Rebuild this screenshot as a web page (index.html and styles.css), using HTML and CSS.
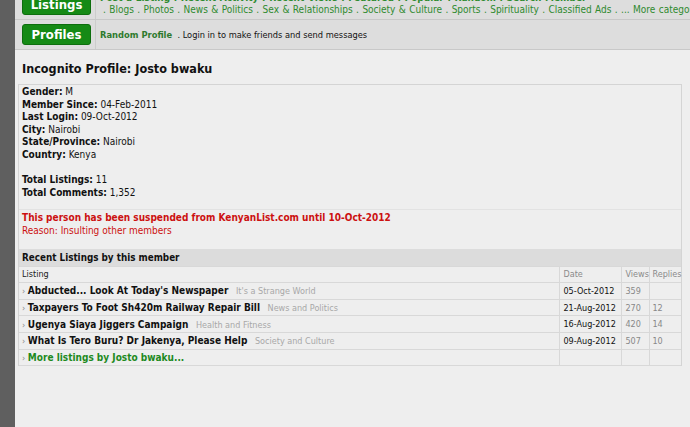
FILE: index.html
```html
<!DOCTYPE html>
<html lang="en">
<head>
    <meta charset="UTF-8">
    <title>Incognito Profile: Josto bwaku</title>
    <link rel="stylesheet" href="styles.css">
</head>
<body>
    <div class="sidebar"></div>
    <div class="main">
        <div class="nav">
            <div class="nav-row">
                <div class="nav-btn-cell"><a href="#" class="nav-btn">Listings</a></div>
                <div class="nav-links">
                    <div class="nav-main">
                        <a href="#">Post a Listing</a> . <a href="#">Recent Activity</a> . <a href="#">Recent Views</a> . <a href="#">Featured</a> . <a href="#">Popular</a> . <a href="#">Random</a> . <a href="#">Search Member</a>
                    </div>
                    <div class="nav-sub">
                        . <a href="#">Blogs</a> . <a href="#">Photos</a> . <a href="#">News &amp; Politics</a> . <a href="#">Sex &amp; Relationships</a> . <a href="#">Society &amp; Culture</a> . <a href="#">Sports</a> . <a href="#">Spirituality</a> . <a href="#">Classified Ads</a> . <a href="#">... More categories</a>
                    </div>
                </div>
            </div>
            <div class="nav-row">
                <div class="nav-btn-cell"><a href="#" class="nav-btn">Profiles</a></div>
                <div class="nav-links nav-single">
                    <a href="#" class="strong-link">Random Profile</a> &nbsp;. Login in to make friends and send messages
                </div>
            </div>
        </div>

        <div class="content">
            <h2 class="page-title">Incognito Profile: Josto bwaku</h2>
            <div class="profile-box">
                <div class="info">
                    <b>Gender:</b> M<br>
                    <b>Member Since:</b> 04-Feb-2011<br>
                    <b>Last Login:</b> 09-Oct-2012<br>
                    <b>City:</b> Nairobi<br>
                    <b>State/Province:</b> Nairobi<br>
                    <b>Country:</b> Kenya<br>
                    <br>
                    <b>Total Listings:</b> 11<br>
                    <b>Total Comments:</b> 1,352
                </div>
                <div class="notice">
                    <b>This person has been suspended from KenyanList.com until 10-Oct-2012</b><br>
                    Reason: Insulting other members
                </div>

                <table class="listings">
                    <colgroup>
                        <col>
                        <col class="w-date">
                        <col class="w-views">
                        <col class="w-replies">
                    </colgroup>
                    <tr>
                        <th colspan="4" class="section-head">Recent Listings by this member</th>
                    </tr>
                    <tr class="col-head">
                        <td class="c-title">Listing</td>
                        <td class="c-date">Date</td>
                        <td class="c-views">Views</td>
                        <td class="c-replies">Replies</td>
                    </tr>
                    <tr>
                        <td class="c-title"><span class="arrow">›</span> <a href="#">Abducted... Look At Today's Newspaper</a> <span class="cat">It's a Strange World</span></td>
                        <td class="c-date">05-Oct-2012</td>
                        <td class="c-views">359</td>
                        <td class="c-replies"></td>
                    </tr>
                    <tr>
                        <td class="c-title"><span class="arrow">›</span> <a href="#">Taxpayers To Foot Sh420m Railway Repair Bill</a> <span class="cat">News and Politics</span></td>
                        <td class="c-date">21-Aug-2012</td>
                        <td class="c-views">270</td>
                        <td class="c-replies">12</td>
                    </tr>
                    <tr>
                        <td class="c-title"><span class="arrow">›</span> <a href="#">Ugenya Siaya Jiggers Campaign</a> <span class="cat">Health and Fitness</span></td>
                        <td class="c-date">16-Aug-2012</td>
                        <td class="c-views">420</td>
                        <td class="c-replies">14</td>
                    </tr>
                    <tr>
                        <td class="c-title"><span class="arrow">›</span> <a href="#">What Is Tero Buru? Dr Jakenya, Please Help</a> <span class="cat">Society and Culture</span></td>
                        <td class="c-date">09-Aug-2012</td>
                        <td class="c-views">507</td>
                        <td class="c-replies">10</td>
                    </tr>
                    <tr>
                        <td class="c-title"><span class="arrow">›</span> <a href="#" class="more">More listings by Josto bwaku...</a></td>
                        <td class="c-date"></td>
                        <td class="c-views"></td>
                        <td class="c-replies"></td>
                    </tr>
                </table>
            </div>
        </div>
    </div>
</body>
</html>
```

FILE: styles.css
```css
body {
    margin: 0;
    display: flex;
    min-height: 100vh;
    background-color: #eeeeee;
    font-family: "DejaVu Sans Condensed", "DejaVu Sans", sans-serif;
    font-size: 10px;
    color: #111;
    overflow: hidden;
}
a {
    text-decoration: none;
}
.sidebar {
    width: 15px;
    flex-shrink: 0;
    background-color: #5f5f5f;
}
.main {
    flex: 1;
    min-width: 0;
}
.nav {
    margin-top: -10px;
    background-color: #dddddd;
}
.nav-row {
    display: flex;
    border-bottom: 1px solid #c8c8c8;
    height: 29px;
}
.nav-btn-cell {
    width: 81px;
    flex-shrink: 0;
    padding: 4px 0 0 7px;
    box-sizing: border-box;
    border-right: 1px solid #cccccc;
}
.nav-btn {
    display: block;
    width: 69px;
    height: 21px;
    box-sizing: border-box;
    background-color: #158a15;
    border: 1px solid #0d6e0d;
    border-radius: 3px;
    color: #fff;
    font-weight: bold;
    font-size: 13px;
    line-height: 19px;
    text-align: center;
}
.nav-links {
    padding: 2px 0 0 4px;
    white-space: nowrap;
    overflow: hidden;
    color: #2f8a2f;
    font-size: 10px;
    line-height: 12px;
}
.nav-links a {
    color: #2f8a2f;
}
.nav-main {
    font-weight: bold;
    word-spacing: 0.5px;
}
.nav-sub {
    padding-left: 3px;
    word-spacing: 0.55px;
}
.nav-single {
    color: #111;
    padding-top: 9px;
    font-size: 9.2px;
}
.nav-single .strong-link {
    color: #2e7a2e;
    font-weight: bold;
    font-size: 9.3px;
}
.content {
    padding: 0 8px 0 3px;
}
.page-title {
    margin: 0;
    padding: 10px 4px 6px;
    font-size: 12.5px;
    line-height: 18px;
}
.profile-box {
    border: 1px solid #d4d4d4;
    border-bottom: none;
}
.info {
    padding: 1px 3px 10px;
    line-height: 12.6px;
    border-bottom: 1px solid #e2e2e2;
}
.notice {
    padding: 2px 3px 11px;
    line-height: 12.6px;
    color: #cc1111;
}
.listings {
    width: 100%;
    border-collapse: collapse;
    table-layout: fixed;
}
.w-date {
    width: 62px;
}
.w-views {
    width: 28px;
}
.w-replies {
    width: 31px;
}
.listings td, .listings th {
    padding: 0 3px;
    height: 15.6px;
    border-bottom: 1px solid #d8d8d8;
    text-align: left;
    white-space: nowrap;
    overflow: hidden;
    font-size: 9px;
}
.section-head {
    background-color: #dcdcdc;
}
.listings .section-head {
    font-size: 9.8px;
    height: 17px;
}
.col-head td {
    color: #8a8a8a;
}
.col-head .c-title {
    color: #222;
}
.c-date {
    border-left: 1px solid #d8d8d8;
}
.c-views {
    border-left: 1px solid #d8d8d8;
    color: #888;
}
.c-replies {
    border-left: 1px solid #d8d8d8;
    color: #888;
}
.listings .c-replies {
    padding: 0 0 0 2px;
    overflow: visible;
}
.c-title a {
    color: #111;
    font-weight: bold;
    font-size: 10px;
}
.c-title a.more {
    color: #1e8a1e;
}
.arrow {
    color: #888;
    font-size: 9px;
}
.cat {
    margin-left: 5px;
    color: #a8a8a8;
    font-size: 9px;
}
```
